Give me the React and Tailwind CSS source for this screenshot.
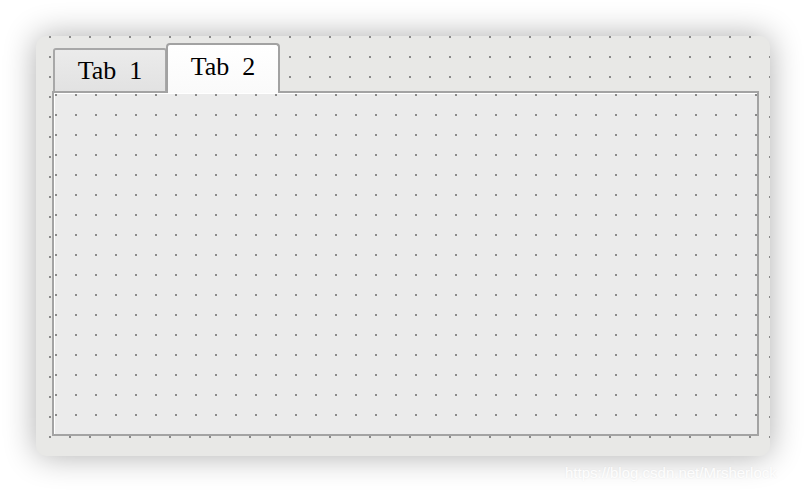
import React from 'react';

const Tab = ({ label, active }) => (
  <div
    className={
      active
        ? 'relative z-10 -ml-px -mb-[2px] flex h-[50px] w-[114px] items-start justify-center rounded-t-[4px] border-2 border-b-0 border-[#a2a2a2] bg-gradient-to-b from-white to-[#fafafa] pt-[8px]'
        : 'flex h-[43px] w-[114px] items-start justify-center rounded-t-[3px] border-2 border-b-0 border-[#a8a8a8] bg-gradient-to-b from-[#ebebeb] to-[#e2e2e2] pt-[7px]'
    }
  >
    <span className="whitespace-pre font-['Liberation_Serif',serif] text-[26px] leading-[28px] text-black">
      {label}
    </span>
  </div>
);

export default function App() {
  return (
    <div className="relative h-[492px] w-[806px] overflow-hidden bg-white p-[36px]">
      <div className="h-[420px] w-[734px] rounded-[10px] bg-[#e8e8e6] bg-[radial-gradient(circle,#8a8a8a_1px,transparent_1.4px)] bg-[length:20px_20px] bg-[position:4px_11px] pl-[16px] pt-[8px] shadow-[0_0_32px_rgba(0,0,0,0.32)]">
        <div className="w-[707px]">
          <div className="flex h-[47px] items-end pl-px">
            <Tab label="Tab  1" />
            <Tab label="Tab  2" active />
          </div>
          <div className="h-[345px] border-2 border-[#a3a3a3] bg-[#ebebeb] bg-[radial-gradient(circle,#8a8a8a_1px,transparent_1.4px)] bg-[length:20px_20px] bg-[position:12px_12px] shadow-[inset_1px_1px_0_#ffffff]" />
        </div>
      </div>
      <div className="absolute left-[565px] top-[462px] font-['Liberation_Sans',sans-serif] text-[15px] text-white/90 [text-shadow:0_0_2px_rgba(0,0,0,0.08)]">
        https://blog.csdn.net/Mrsherlock
      </div>
    </div>
  );
}
